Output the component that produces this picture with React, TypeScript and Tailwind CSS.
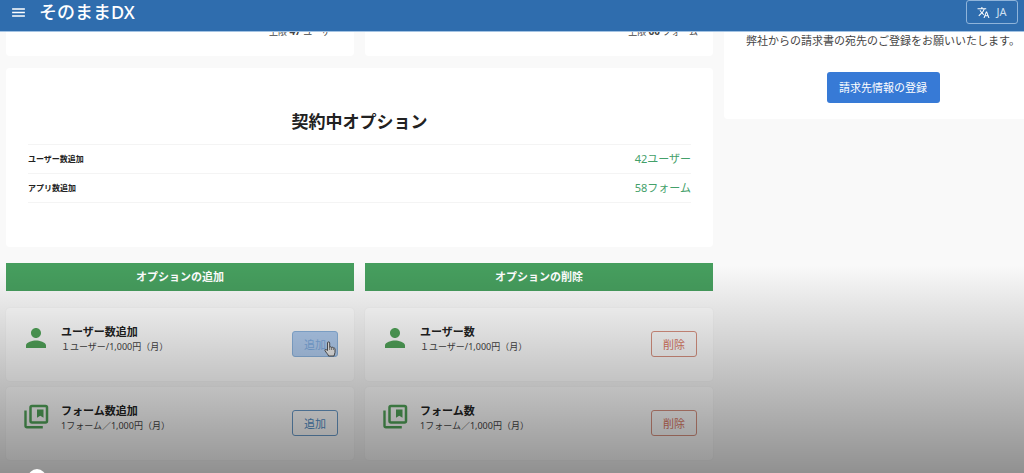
import React from 'react';
import { MdMenu, MdPerson, MdTranslate } from 'react-icons/md';

type OptionItem = {
  kind: 'user' | 'form';
  title: string;
  price: string;
  hovered?: boolean;
};

const addItems: OptionItem[] = [
  { kind: 'user', title: 'ユーザー数追加', price: '１ユーザー/1,000円（月）', hovered: true },
  { kind: 'form', title: 'フォーム数追加', price: '1フォーム／1,000円（月）' },
];

const removeItems: OptionItem[] = [
  { kind: 'user', title: 'ユーザー数', price: '１ユーザー/1,000円（月）' },
  { kind: 'form', title: 'フォーム数', price: '1フォーム／1,000円（月）' },
];

const contracted = [
  { label: 'ユーザー数追加', value: '42ユーザー' },
  { label: 'アプリ数追加', value: '58フォーム' },
];

const Header = () => {
  return (
    <header className="relative z-20 flex h-8 items-start justify-between border-b border-[#a3c3e3] bg-[#2f6dae] pl-2.5 pr-1.5 text-white">
      <div className="flex h-6 items-center gap-3">
        <button type="button" aria-label="メニュー">
          <MdMenu size={17} />
        </button>
        <span className="text-[18px] font-medium leading-6">そのままDX</span>
      </div>
      <button
        type="button"
        className="flex h-6 w-[52px] items-center justify-center gap-1.5 rounded-[3px] border border-[#8fb4da] text-[11px] text-[#cfe0f1]"
      >
        <MdTranslate size={13} className="text-white" />
        JA
      </button>
    </header>
  );
};

const FormIcon = () => (
  <svg viewBox="0 0 30 30" className="size-[30px] shrink-0 text-[#52a55a]" fill="none" aria-hidden="true">
    <rect x="9.5" y="4" width="16.500" height="16.500" rx="1.500" stroke="currentColor" strokeWidth="2.500" />
    <path d="M4.500 8.500v15.300a1.500 1.500 0 0 0 1.500 1.500h15.800" stroke="currentColor" strokeWidth="2.400" />
    <path d="M16 7.500h6.500v8.200l-3.250-2-3.250 2z" fill="currentColor" />
  </svg>
);

const HandCursor = () => (
  <svg viewBox="0 0 12 16" className="pointer-events-none absolute -bottom-px right-px h-4 w-3" aria-hidden="true">
    <path
      d="M3.500 9.500V2a1.100 1.100 0 0 1 2.200 0v4.200c.3-.6 1.700-.6 1.900.3.5-.5 1.600-.3 1.800.5.6-.3 1.600 0 1.600 1v3.400c0 1.200-.8 2-1 3.600H4.600C4.300 13.600 2 11.600 1 9.600c-.4-.9.7-1.600 1.400-.9z"
      fill="#f1f1f1"
      stroke="#444"
      strokeWidth="0.9"
      strokeLinejoin="round"
    />
    <path d="M5.700 6v3M7.600 6.600V9M9.400 7.200V9" stroke="#555" strokeWidth="0.7" fill="none" />
  </svg>
);

const OptionCard = ({ item, action }: { item: OptionItem; action: 'add' | 'remove' }) => {
  let color = 'border-[#da9382] text-[#dd7863]';
  if (action === 'add') {
    color = item.hovered ? 'border-[#8db5e0] bg-[#b4d0f3] text-[#80aee4]' : 'border-[#6a9ccb] text-[#5391ca]';
  }

  return (
    <li className="flex h-[73px] items-start gap-2.5 rounded bg-white pl-[15px] pr-4 pt-[15px] shadow-[0_0_2px_rgba(0,0,0,0.06)]">
      {item.kind === 'user' ? <MdPerson size={30} className="shrink-0 text-[#52a55a]" /> : <FormIcon />}
      <div className="min-w-0 flex-1 pt-px">
        <h3 className="text-[11px] font-bold leading-4">{item.title}</h3>
        <p className="whitespace-nowrap text-[9px] leading-[14px] text-[#444]">{item.price}</p>
      </div>
      <button
        type="button"
        className={`relative mt-2 h-[26px] w-[46px] rounded-[3px] border text-[11px] leading-none ${color}`}
      >
        {action === 'add' ? '追加' : '削除'}
        {item.hovered && <HandCursor />}
      </button>
    </li>
  );
};

const OptionColumn = ({ title, items, action }: { title: string; items: OptionItem[]; action: 'add' | 'remove' }) => (
  <section>
    <h2 className="bg-[#469e5e] text-center text-[11px] font-bold leading-7 text-white">{title}</h2>
    <ul className="mt-[17px] flex flex-col gap-1.5">
      {items.map((item) => (
        <OptionCard key={item.title} item={item} action={action} />
      ))}
    </ul>
  </section>
);

const LimitCard = ({ count, unit }: { count: string; unit: string }) => (
  <div className="h-9 rounded bg-white pr-[15px] pt-1 text-right text-[9px] leading-[14px] text-[#444]">
    上限 <b className="text-[10px]">{count}</b> {unit}
  </div>
);

const App = () => {
  return (
    <div
      lang="ja"
      className="relative min-h-screen overflow-hidden bg-[#f9f9f9] font-['Noto_Sans','Noto_Sans_CJK_JP',sans-serif] text-[#222]"
    >
      <Header />
      <main className="-mt-3 grid grid-cols-[minmax(0,707fr)_minmax(0,300fr)] items-start gap-[11px] pl-1.5">
        <div>
          <div className="grid grid-cols-2 gap-[11px]">
            <LimitCard count="47" unit="ユーザー" />
            <LimitCard count="60" unit="フォーム" />
          </div>

          <section className="mt-3 rounded bg-white px-[22px] pb-11 pt-[42px]">
            <h2 className="mb-2.5 text-center text-[17px] font-bold leading-6">契約中オプション</h2>
            <table className="w-full border-t border-[#f4f4f4]">
              <tbody>
                {contracted.map((row) => (
                  <tr key={row.label} className="h-[29px] border-b border-[#f4f4f4]">
                    <th scope="row" className="p-0 text-left text-[8px] font-bold">
                      {row.label}
                    </th>
                    <td className="p-0 text-right text-[11px] text-[#43a06a]">{row.value}</td>
                  </tr>
                ))}
              </tbody>
            </table>
          </section>

          <div className="mt-4 grid grid-cols-2 gap-[11px]">
            <OptionColumn title="オプションの追加" items={addItems} action="add" />
            <OptionColumn title="オプションの削除" items={removeItems} action="remove" />
          </div>
        </div>

        <aside className="rounded-bl bg-white pb-4 pl-[18px] pt-[11px] text-center">
          <p className="whitespace-nowrap text-[11px] leading-5 text-[#444]">
            弊社からの請求書の宛先のご登録をお願いいたします。
          </p>
          <button
            type="button"
            className="mt-[21px] h-[31px] w-[113px] rounded-[3px] bg-[#377ad6] text-[11px] leading-none text-white"
          >
            請求先情報の登録
          </button>
        </aside>
      </main>

      {/* player shade and seek handle over the page */}
      <div className="pointer-events-none absolute inset-x-0 bottom-0 z-10 h-52 bg-linear-to-b from-transparent to-black/42" />
      <div className="pointer-events-none absolute -bottom-3.5 left-7 z-20 size-[18px] rounded-full bg-white" />
    </div>
  );
};

export default App;
